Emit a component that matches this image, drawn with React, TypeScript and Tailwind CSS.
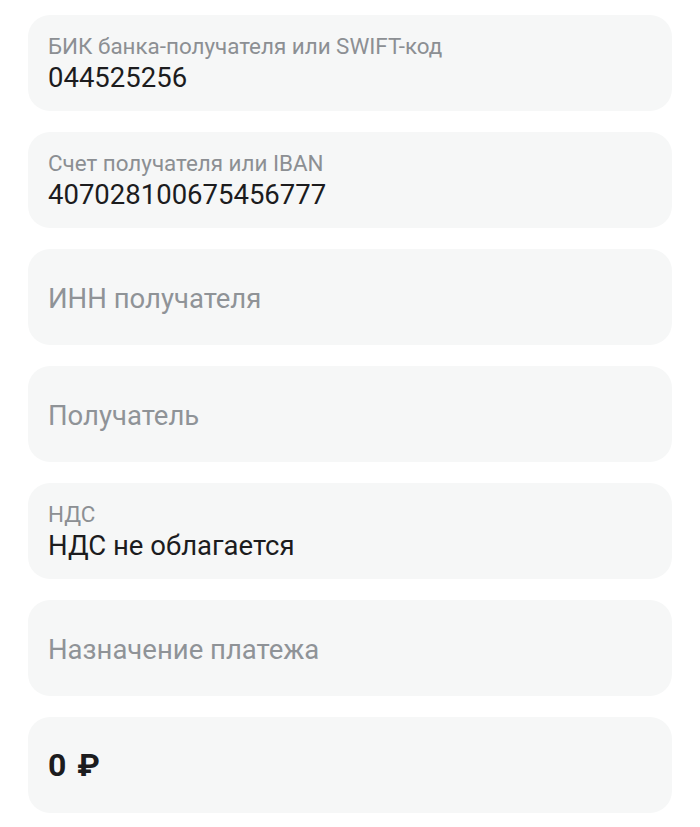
import React from "react";

type Field = {
  label: string;
  value?: string;
};

const fields: Field[] = [
  { label: "БИК банка-получателя или SWIFT-код", value: "044525256" },
  { label: "Счет получателя или IBAN", value: "407028100675456777" },
  { label: "ИНН получателя" },
  { label: "Получатель" },
  { label: "НДС", value: "НДС не облагается" },
  { label: "Назначение платежа" },
];

function FieldBox({ field }: { field: Field }) {
  if (field.value) {
    return (
      <div className="h-[96px] rounded-[22px] bg-[#f6f7f7] pl-[20px] pr-5 pt-[18px]">
        <div className="text-[22.4px] leading-[27px] text-[#8c8f93]">{field.label}</div>
        <div className="mt-[2px] text-[27.5px] leading-[32px] text-[#1c1c1e]">{field.value}</div>
      </div>
    );
  }
  return (
    <div className="flex h-[96px] items-center rounded-[22px] bg-[#f6f7f7] pl-[20px] pr-5 pt-[4px]">
      <div className="text-[27.5px] leading-[32px] text-[#8f9397]">{field.label}</div>
    </div>
  );
}

export default function App() {
  return (
    <div
      className="min-h-screen bg-white px-[28px] pt-[15px]"
      style={{ fontFamily: "Roboto, 'Noto Sans', sans-serif" }}
    >
      <div className="flex flex-col gap-[21px]">
        {fields.map((f) => (
          <FieldBox key={f.label} field={f} />
        ))}
        <div className="flex h-[96px] items-center rounded-[22px] bg-[#f6f7f7] pl-[20px] pr-5">
          <div className="text-[32px] font-bold leading-[36px] text-[#1c1c1e]">
            0 <span className="ml-[3px]">₽</span>
          </div>
        </div>
      </div>
    </div>
  );
}
